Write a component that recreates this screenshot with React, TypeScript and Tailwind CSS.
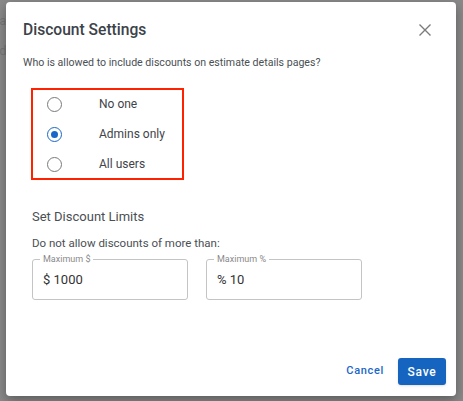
import React from "react";

function Radio({ checked, label }: { checked?: boolean; label: string }) {
  return (
    <div className="flex h-[28px] items-center">
      <div className="flex w-[66px] justify-start pl-[14px]">
        <span
          className={
            "flex h-[15px] w-[15px] items-center justify-center rounded-full border-[1.5px] " +
            (checked ? "border-[#1a66c9]" : "border-[#7a7a7a]")
          }
        >
          {checked && <span className="h-[7px] w-[7px] rounded-full bg-[#1a66c9]" />}
        </span>
      </div>
      <span className="text-[12px] text-[#3f4449]">{label}</span>
    </div>
  );
}

function Field({ label, value }: { label: string; value: string }) {
  return (
    <div className="relative flex h-[41px] w-[156px] items-center rounded-[3px] border border-[#c4c4c4] px-[10px]">
      <span className="absolute left-[7px] top-[-6px] bg-white px-[3px] text-[9px] leading-[10px] text-[#8a8a8a]">
        {label}
      </span>
      <span className="text-[13px] text-[#333]">{value}</span>
    </div>
  );
}

export default function App() {
  return (
    <div
      className="relative h-[401px] w-[463px] overflow-hidden bg-white"
      style={{ fontFamily: "Roboto, 'Noto Sans', sans-serif" }}
    >
      <div className="ml-[-4px] pt-[6px] text-[13px] leading-[30px] text-[#444]">
        <div>la</div>
        <div>ld</div>
      </div>
      <div className="absolute inset-0 bg-[#7d7d7d]/90 pl-[6px] pt-[2px]">
        <div className="relative flex h-[394px] w-[450px] flex-col rounded-[4px] bg-white shadow-[0_4px_12px_rgba(0,0,0,0.35)]">
          <div className="flex items-center justify-between pl-[17px] pr-[24px] pt-[18px]">
            <h2 className="text-[15.6px] font-medium leading-[20px] text-[#3c4249]">Discount Settings</h2>
            <svg width="14" height="14" viewBox="0 0 14 14">
              <path d="M1.5 1.5 L12.5 12.5 M12.5 1.5 L1.5 12.5" stroke="#7b7b7b" strokeWidth="1.4" />
            </svg>
          </div>
          <p className="ml-[17px] mt-[16px] text-[10.6px] leading-[14px] text-[#4a4f54]">
            Who is allowed to include discounts on estimate details pages?
          </p>
          <div className="ml-[25px] mt-[18px] flex w-[153px] flex-col gap-[2px] border-2 border-[#ff2200]">
            <Radio label="No one" />
            <Radio checked label="Admins only" />
            <Radio label="All users" />
          </div>
          <div className="ml-[26px] mt-[29px] text-[13px] leading-[16px] text-[#4a4f54]">Set Discount Limits</div>
          <div className="ml-[26px] mt-[11px] text-[11.5px] leading-[14px] text-[#4a4f54]">
            Do not allow discounts of more than:
          </div>
          <div className="ml-[26px] mt-[9px] flex gap-[18px]">
            <Field label="Maximum $" value="$ 1000" />
            <Field label="Maximum %" value="% 10" />
          </div>
          <div className="mt-auto flex items-center justify-end gap-[14px] pb-[11px] pr-[10px]">
            <span className="text-[11px] font-medium tracking-[0.06em] text-[#1a66c9]">Cancel</span>
            <span className="flex h-[27px] w-[48px] items-center justify-center rounded-[3px] bg-[#1565c0] text-[12px] font-medium tracking-[0.06em] text-white shadow-sm">
              Save
            </span>
          </div>
        </div>
      </div>
    </div>
  );
}
